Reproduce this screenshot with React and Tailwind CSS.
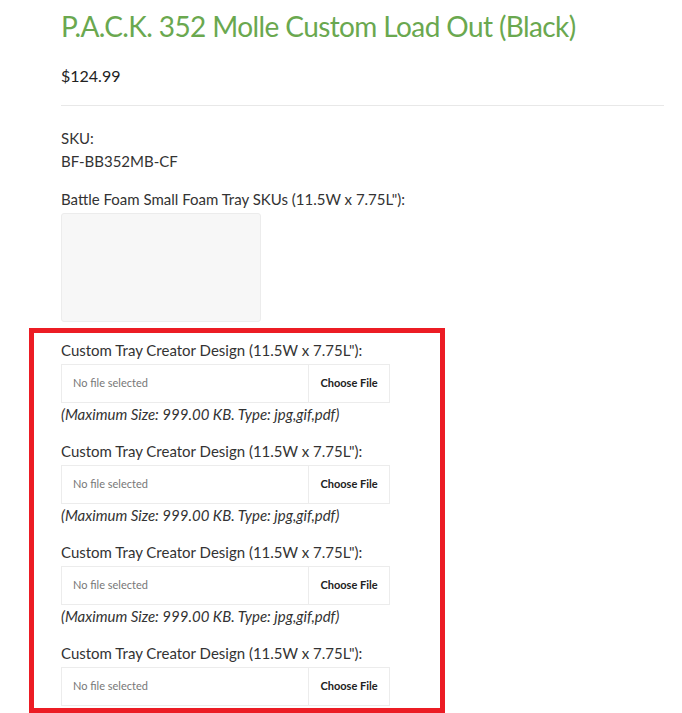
import React from "react";

const FileField = ({ showHint }) => (
  <div>
    <p className="h-[23px] leading-[23px] text-[15px] text-[#333]">
      Custom Tray Creator Design (11.5W x 7.75L"):
    </p>
    <div className="mt-[2px] flex h-[39px] w-[329px] border border-[#ececec] bg-white">
      <div className="flex flex-1 items-center pl-[11px] text-[11px] text-[#777]">
        No file selected
      </div>
      <div className="flex w-[81px] items-center justify-center border-l border-[#ececec] text-[11px] font-bold text-[#222]">
        Choose File
      </div>
    </div>
    {showHint && (
      <p className="h-[23px] leading-[23px] text-[15px] italic text-[#333]">
        (Maximum Size: 999.00 KB. Type: jpg,gif,pdf)
      </p>
    )}
  </div>
);

export default function App() {
  const fields = [true, true, true, false];

  return (
    <div
      className="h-[713px] overflow-hidden bg-white pl-[61px] pr-[18px]"
      style={{ fontFamily: '"Lato", "Liberation Sans", sans-serif' }}
    >
      {/* Heading */}
      <h1 className="pt-[6px] h-[46px] leading-[40px] text-[28px] tracking-[-0.6px] font-normal text-[#6aa84f]">
        P.A.C.K. 352 Molle Custom Load Out (Black)
      </h1>
      <p className="mt-[18px] h-[24px] leading-[24px] text-[16px] text-[#222]">$124.99</p>
      <div className="mt-[17px] border-t border-[#e8e8e8]" />

      {/* SKU info */}
      <div className="mt-[21px] text-[15px] text-[#333] leading-[23px]">
        <p>SKU:</p>
        <p>BF-BB352MB-CF</p>
        <p className="mt-[15px]">Battle Foam Small Foam Tray SKUs (11.5W x 7.75L"):</p>
      </div>
      <div className="mt-[2px] h-[109px] w-[200px] rounded-[3px] border border-[#ececec] bg-[#f7f7f7]" />

      {/* Upload fields */}
      <div className="ml-[-32px] mt-[6px] w-[416px] border-[5px] border-[#ec1c24] pl-[27px] pt-[6px] pb-[2px]">
        <div className="flex flex-col gap-[14px]">
          {fields.map((hint, index) => (
            <FileField key={index} showHint={hint} />
          ))}
        </div>
      </div>
    </div>
  );
}
